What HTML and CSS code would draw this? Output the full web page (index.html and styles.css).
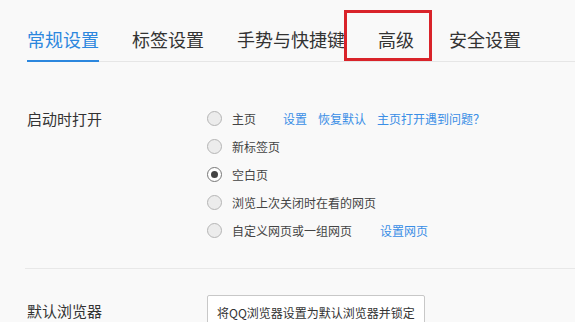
FILE: index.html
```html
<!DOCTYPE html>
<html lang="zh-CN">
<head>
  <meta charset="UTF-8">
  <title>设置</title>
  <link rel="stylesheet" href="styles.css">
</head>
<body>
  <div class="tabs">
    <a class="tab active">常规设置</a>
    <a class="tab">标签设置</a>
    <a class="tab">手势与快捷键</a>
    <a class="tab">高级</a>
    <a class="tab">安全设置</a>
  </div>
  <div class="mark"></div>

  <div class="section">
    <div class="section-label">启动时打开</div>
    <div class="options">
      <div class="option">
        <span class="radio"></span><span class="text">主页</span>
        <a class="link first">设置</a><a class="link">恢复默认</a><a class="link">主页打开遇到问题？</a>
      </div>
      <div class="option"><span class="radio"></span><span class="text">新标签页</span></div>
      <div class="option"><span class="radio checked"></span><span class="text">空白页</span></div>
      <div class="option"><span class="radio"></span><span class="text">浏览上次关闭时在看的网页</span></div>
      <div class="option">
        <span class="radio"></span><span class="text">自定义网页或一组网页</span>
        <a class="link wide">设置网页</a>
      </div>
    </div>
  </div>

  <div class="divider"></div>

  <div class="section second">
    <div class="section-label">默认浏览器</div>
    <div class="options">
      <button class="btn">将QQ浏览器设置为默认浏览器并锁定</button>
    </div>
  </div>
</body>
</html>
```

FILE: styles.css
```css
body {
  margin: 0;
  background: #f9f9f9;
  font-family: "Microsoft YaHei", "Noto Sans CJK SC", sans-serif;
  color: #333;
  position: relative;
  overflow: hidden;
}
.tabs {
  display: flex;
  margin-left: 27px;
  border-bottom: 1px solid #e6e6e6;
}
.tab {
  padding: 27px 0 9px;
  margin-right: 33px;
  font-size: 18px;
  line-height: 24px;
  color: #333;
  border-bottom: 2px solid transparent;
  margin-bottom: -1px;
}
.tab.active {
  color: #2c87de;
  border-bottom-color: #2c87de;
}
.tab:nth-child(4) {
  margin-right: 35px;
}
.mark {
  position: absolute;
  left: 344px;
  top: 10px;
  width: 82px;
  height: 45px;
  border: 3px solid #d9232a;
}
.section {
  display: flex;
  padding-left: 27px;
  margin-top: 42px;
}
.section-label {
  width: 180px;
  font-size: 15px;
  line-height: 30px;
  color: #333;
}
.option {
  display: flex;
  align-items: center;
  height: 28px;
  font-size: 12px;
}
.radio {
  width: 13px;
  height: 13px;
  border: 1px solid #b5b5b5;
  border-radius: 50%;
  background: #ececec;
  margin-right: 10px;
  position: relative;
}
.radio.checked {
  background: #fff;
  border-color: #777;
}
.radio.checked::after {
  content: "";
  position: absolute;
  left: 3px;
  top: 3px;
  width: 7px;
  height: 7px;
  border-radius: 50%;
  background: #444;
}
.text {
  color: #444;
}
.link {
  color: #3a8ee6;
  margin-left: 11px;
}
.link.first {
  margin-left: 27px;
}
.link.wide {
  margin-left: 28px;
}
.divider {
  height: 1px;
  background: #e8e8e8;
  margin: 24px 0 0 25px;
}
.section.second {
  margin-top: 24px;
  align-items: center;
}
.btn {
  height: 34px;
  padding: 0 9px;
  font-family: inherit;
  font-size: 12px;
  color: #333;
  background: #fff;
  border: 1px solid #c8c8c8;
  border-radius: 2px;
  margin-top: 2px;
}
```
